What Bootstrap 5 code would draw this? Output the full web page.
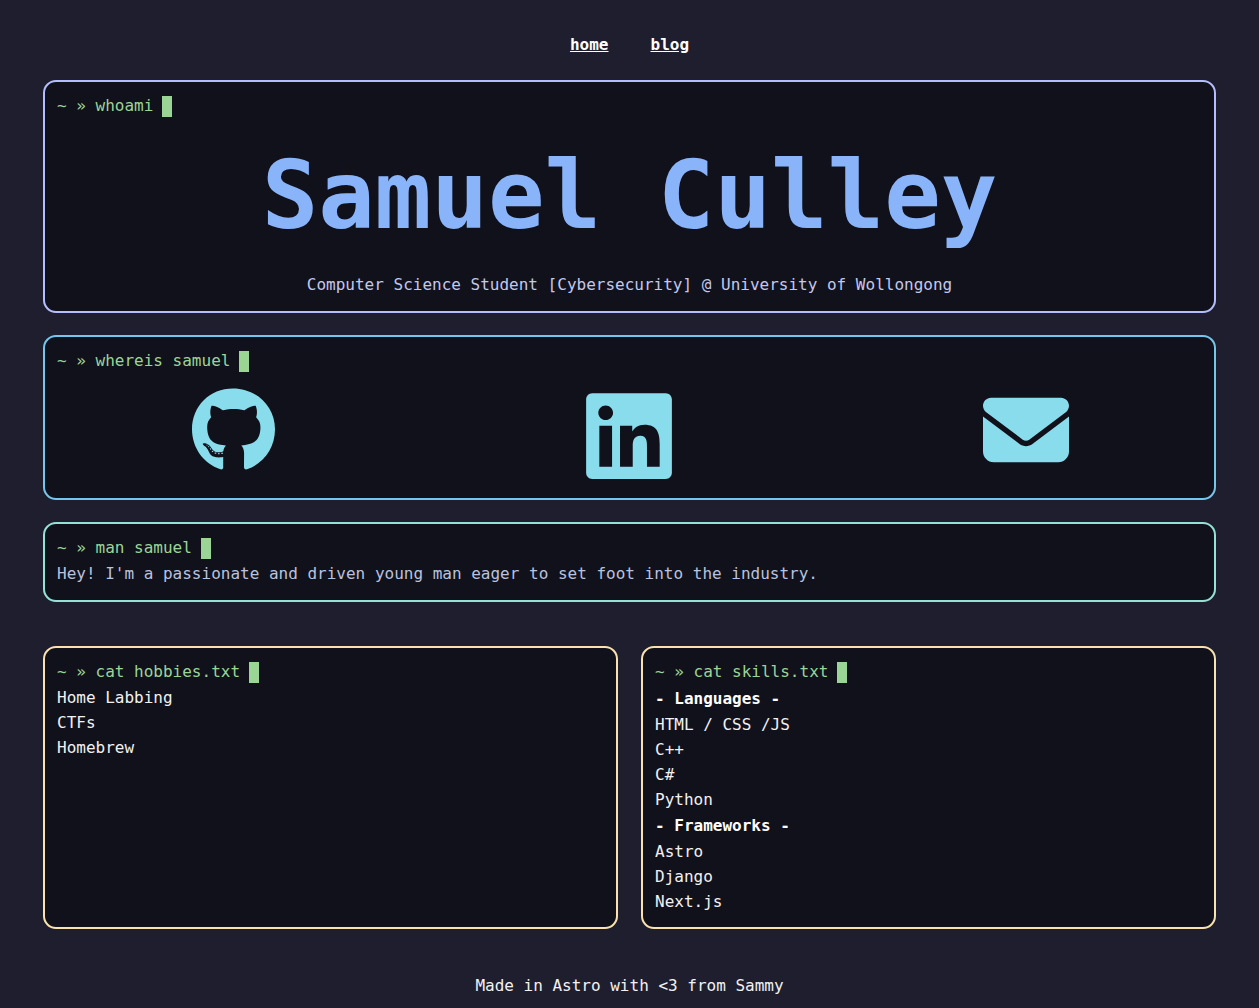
<!DOCTYPE html>
<html lang="en">
<head>
<meta charset="utf-8">
<meta name="viewport" content="width=device-width, initial-scale=1">
<title>Samuel Culley</title>
<link href="https://cdn.jsdelivr.net/npm/bootstrap@5.3.0/dist/css/bootstrap.min.css" rel="stylesheet">
<style>
  body {
    background: #1e1e2e;
    color: #f2f2f2;
    font: 16px/26px "DejaVu Sans Mono", "Liberation Mono", monospace;
    padding: 32px 43px 8px;
  }
  .site-nav { gap: 42px; margin-bottom: 22px; }
  .site-nav a { color: #fff; }
  .stack { gap: 22px; }
  .panel {
    background: #11111b;
    border: 2px solid;
    border-radius: 13px;
    padding: 11px 12px 13px;
  }
  .panel-lavender { border-color: #b4befe; }
  .panel-sapphire { border-color: #74c7ec; }
  .panel-teal { border-color: #94e2d5; }
  .panel-yellow { border-color: #f9e2af; }
  .prompt { color: #9bd596; font-size: 16px; line-height: 26px; }
  .cursor { width: 10px; height: 21px; margin-left: 9px; background: #9bd596; }
  .full-name { color: #89b4fa; font-size: 94px; line-height: 153px; }
  .tagline { color: #c3c8ee; }
  .bio { color: #bac2de; }
  .contacts { --bs-gutter-x: 44px; margin-top: 13px; }
  .contacts a { color: #89dceb; }
  .contacts svg { display: block; fill: currentColor; }
  .files { --bs-gutter-x: 23px; --bs-gutter-y: 22px; margin-top: 0; }
  .lines { line-height: 25px; }
  .group-title { font-size: 16px; line-height: 27px; color: #fff; }
  .site-footer { margin-top: 44px; }
</style>
</head>
<body>
<nav class="site-nav d-flex justify-content-center fw-bold" aria-label="Main">
  <a href="#">home</a>
  <a href="#">blog</a>
</nav>

<main class="stack d-flex flex-column">
  <section class="panel panel-lavender">
    <div class="prompt d-flex align-items-center">~ » whoami<span class="cursor"></span></div>
    <h1 class="full-name fw-bold text-center mb-0">Samuel Culley</h1>
    <p class="tagline text-center mb-0">Computer Science Student [Cybersecurity] @ University of Wollongong</p>
  </section>

  <section class="panel panel-sapphire">
    <h2 class="prompt d-flex align-items-center fw-normal mb-0">~ » whereis samuel<span class="cursor"></span></h2>
    <div class="contacts row">
      <div class="col-4 d-flex justify-content-center">
        <a href="#" aria-label="GitHub"><svg width="83" height="86" viewBox="0 0 496 512" aria-hidden="true"><path d="M165.9 397.4c0 2-2.3 3.6-5.2 3.6-3.3.3-5.6-1.3-5.6-3.6 0-2 2.3-3.6 5.2-3.6 3-.3 5.6 1.3 5.6 3.6zm-31.1-4.5c-.7 2 1.3 4.3 4.3 4.9 2.6 1 5.6 0 6.2-2s-1.3-4.3-4.3-5.2c-2.6-.7-5.5.3-6.2 2.3zm44.2-1.7c-2.9.7-4.9 2.6-4.6 4.9.3 2 2.9 3.3 5.9 2.6 2.9-.7 4.9-2.6 4.6-4.6-.3-1.9-3-3.2-5.9-2.9zM244.8 8C106.1 8 0 113.3 0 252c0 110.9 69.8 205.8 169.5 239.2 12.8 2.3 17.3-5.6 17.3-12.1 0-6.2-.3-40.4-.3-61.4 0 0-70 15-84.7-29.8 0 0-11.4-29.1-27.8-36.6 0 0-22.9-15.7 1.6-15.4 0 0 24.9 2 38.6 25.8 21.9 38.6 58.6 27.5 72.9 20.9 2.3-16 8.8-27.1 16-33.7-55.9-6.2-112.3-14.3-112.3-110.5 0-27.5 7.6-41.3 23.6-58.9-2.6-6.5-11.1-33.3 2.6-67.9 20.9-6.5 69 27 69 27 20-5.6 41.5-8.5 62.8-8.5s42.8 2.9 62.8 8.5c0 0 48.1-33.6 69-27 13.7 34.7 5.2 61.4 2.6 67.9 16 17.7 25.8 31.5 25.8 58.9 0 96.5-58.9 104.2-114.8 110.5 9.2 7.9 17 22.9 17 46.4 0 33.7-.3 75.4-.3 83.6 0 6.5 4.6 14.4 17.3 12.1C428.2 457.8 496 362.9 496 252 496 113.3 383.5 8 244.8 8zM97.2 352.9c-1.3 1-1 3.3.7 5.2 1.6 1.6 3.9 2.3 5.2 1 1.3-1 1-3.3-.7-5.2-1.6-1.6-3.9-2.3-5.2-1zm-10.8-8.1c-.7 1.3.3 2.9 2.3 3.9 1.6 1 3.6.7 4.3-.7.7-1.3-.3-2.9-2.3-3.9-2-.6-3.6-.3-4.3.7zm32.4 35.6c-1.6 1.3-1 4.3 1.3 6.2 2.3 2.3 5.2 2.6 6.5 1 1.3-1.3.7-4.3-1.3-6.2-2.2-2.3-5.2-2.6-6.5-1zm-11.4-14.7c-1.6 1-1.6 3.6 0 5.9 1.6 2.3 4.3 3.3 5.6 2.3 1.6-1.3 1.6-3.9 0-6.2-1.4-2.3-4-3.3-5.6-2z"/></svg></a>
      </div>
      <div class="col-4 d-flex justify-content-center">
        <a href="#" aria-label="LinkedIn"><svg width="86" height="98" viewBox="0 0 448 512" aria-hidden="true"><path d="M416 32H31.9C14.3 32 0 46.5 0 64.3v383.4C0 465.5 14.3 480 31.9 480H416c17.6 0 32-14.5 32-32.3V64.3c0-17.8-14.4-32.3-32-32.3zM135.4 416H69V202.2h66.5V416zm-33.2-243c-21.3 0-38.5-17.3-38.5-38.5S80.9 96 102.2 96c21.2 0 38.5 17.3 38.5 38.5 0 21.3-17.2 38.5-38.5 38.5zm282.1 243h-66.4V312c0-24.8-.5-56.7-34.5-56.7-34.6 0-39.9 27-39.9 54.9V416h-66.4V202.2h63.7v29.2h.9c8.9-16.8 30.6-34.5 62.9-34.5 67.2 0 79.7 44.3 79.7 101.9V416z"/></svg></a>
      </div>
      <div class="col-4 d-flex justify-content-center">
        <a href="#" aria-label="Email"><svg width="86" height="86" viewBox="0 0 512 512" aria-hidden="true"><path d="M48 64C21.5 64 0 85.5 0 112c0 15.1 7.1 29.3 19.2 38.4L236.8 313.6c11.4 8.5 27 8.5 38.4 0L492.8 150.4c12.1-9.1 19.2-23.3 19.2-38.4c0-26.5-21.5-48-48-48H48zM0 176V384c0 35.3 28.7 64 64 64H448c35.3 0 64-28.7 64-64V176L294.4 339.2c-22.8 17.1-54 17.1-76.8 0L0 176z"/></svg></a>
      </div>
    </div>
  </section>

  <section class="panel panel-teal">
    <h2 class="prompt d-flex align-items-center fw-normal mb-0">~ » man samuel<span class="cursor"></span></h2>
    <p class="bio mb-0">Hey! I'm a passionate and driven young man eager to set foot into the industry.</p>
  </section>

  <div class="files row">
    <div class="col-md-6">
      <section class="panel panel-yellow h-100">
        <h2 class="prompt d-flex align-items-center fw-normal mb-0">~ » cat hobbies.txt<span class="cursor"></span></h2>
        <ul class="lines list-unstyled mb-0">
          <li>Home Labbing</li>
          <li>CTFs</li>
          <li>Homebrew</li>
        </ul>
      </section>
    </div>
    <div class="col-md-6">
      <section class="panel panel-yellow h-100">
        <h2 class="prompt d-flex align-items-center fw-normal mb-0">~ » cat skills.txt<span class="cursor"></span></h2>
        <h3 class="group-title fw-bold mb-0">- Languages -</h3>
        <ul class="lines list-unstyled mb-0">
          <li>HTML / CSS /JS</li>
          <li>C++</li>
          <li>C#</li>
          <li>Python</li>
        </ul>
        <h3 class="group-title fw-bold mb-0">- Frameworks -</h3>
        <ul class="lines list-unstyled mb-0">
          <li>Astro</li>
          <li>Django</li>
          <li>Next.js</li>
        </ul>
      </section>
    </div>
  </div>
</main>

<footer class="site-footer text-center">Made in Astro with &lt;3 from Sammy</footer>
<script src="https://cdn.jsdelivr.net/npm/bootstrap@5.3.0/dist/js/bootstrap.bundle.min.js"></script>
</body>
</html>
